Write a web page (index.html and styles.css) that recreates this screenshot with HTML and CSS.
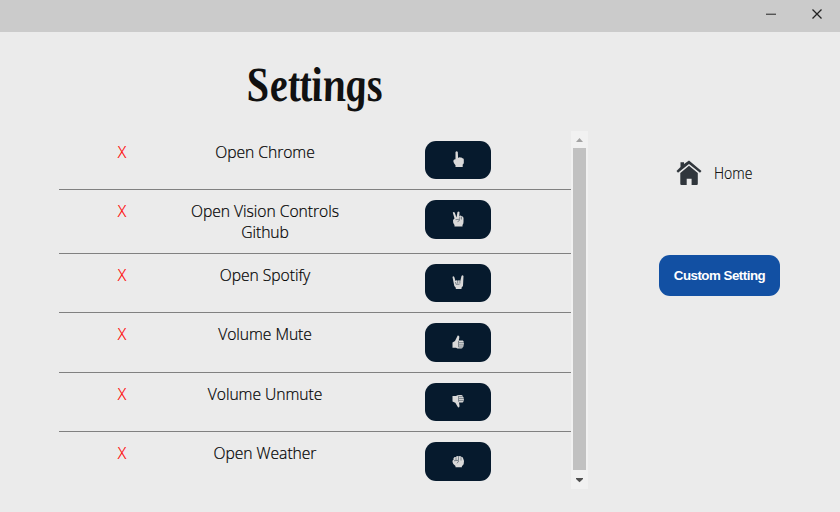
FILE: index.html
```html
<!DOCTYPE html>
<html lang="en">
<head>
<meta charset="utf-8">
<title>Settings</title>
<link rel="stylesheet" href="styles.css">
</head>
<body>
<header class="titlebar">
  <svg class="win" viewBox="0 0 16 16"><path d="M3 13.5h10" stroke="#999"/><path d="M3 14.5h10" stroke="#555"/></svg>
  <svg class="win" viewBox="0 0 16 16"><path d="M3.5 9.5l9 9M12.5 9.5l-9 9" stroke="#222" stroke-width="1.3"/></svg>
</header>
<main class="layout">
  <section class="panel">
    <h1 class="title"><span>Settings</span></h1>
    <div class="scroller">
      <ul class="list">
        <li class="row"><span class="remove">X</span><span class="name">Open Chrome</span><button class="gesture"><svg viewBox="0 0 16 18"><path d="M5 2Q6.2.3 7.3 2L7.6 8Q9 6.6 10 7.6Q11 7 12 8.2Q13.7 8.2 13.3 10V13Q13 14 12.2 14.5V17H5V15.2Q3 13.4 2.8 11Q3 9 5 9.2Z"/></svg></button></li>
        <li class="row"><span class="remove">X</span><span class="name">Open Vision Controls Github</span><button class="gesture"><svg viewBox="0 0 16 18"><path d="M2.3 2.5Q3.2 1.4 4.2 2.5L6 7.5L7 2Q8 .8 9 2L8.8 6.5Q10.2 4.8 11 6.3Q12.8 6 13 8V12Q13 14 12 15V16.5H4V15Q2.3 13.5 2.5 10.5Q2.6 9.3 4 8.5Z"/><path class="crease" d="M5 9.7L9 9.2Q9.5 11 7 11.7M9.3 6.8V9.2M11 6.8V9.5"/></svg></button></li>
        <li class="row"><span class="remove">X</span><span class="name">Open Spotify</span><button class="gesture"><svg viewBox="0 0 16 18"><path d="M2 4Q2.8 2.7 3.8 4L5 8Q6 6.5 7.2 7.8Q8.6 6.6 9.8 8L11 3Q12 1.5 13 3L12.6 11Q13 13.5 11 14.7V16H5.3V14.7Q3.4 13.7 3.4 11Z"/><path class="crease" d="M5 9L5.5 11.3H9M7.2 8V10.5M9.4 8V10.5"/></svg></button></li>
        <li class="row"><span class="remove">X</span><span class="name">Volume Mute</span><button class="gesture"><svg viewBox="0 0 16 18"><path d="M2 9.5L4.5 8L7.2 2.5Q9.3 2 8.8 5L8.2 7.5H12.3Q13.6 8 13 9.5Q14 10.7 13 12Q13.5 13.5 12.3 14.2Q12 15.5 10.5 15.5H7L5.5 14.8H2Z"/><path class="crease" d="M8.5 9.7H13M8.5 11.9H13M8.5 14H12.3M8 8V14.3"/></svg></button></li>
        <li class="row"><span class="remove">X</span><span class="name">Volume Unmute</span><button class="gesture"><svg viewBox="0 0 16 18"><path d="M2 4H5.5Q7 2.5 11 3Q12.3 3.2 12.3 4.4Q13.5 5 13 6.5Q14 7.7 13 9Q13 10.4 12 10.4H8.5L9 13.5Q9.2 15.8 7.5 15.3L4.8 10.7L2 9.5Z"/><path class="crease" d="M8.5 4.6H12.3M8.5 6.6H13M8.5 8.6H13M8 4V9.7"/></svg></button></li>
        <li class="row"><span class="remove">X</span><span class="name">Open Weather</span><button class="gesture"><svg viewBox="0 0 16 18"><path d="M3 6.3Q3.8 4.5 5.4 5Q6.6 3.2 8 4.4Q9.8 3.3 10.6 4.8Q12.5 4.7 12.8 6.8Q14.1 9 13.2 12Q12.6 13.6 11.4 14V15.3H5V14Q2.4 12.5 2 10Q1.7 8.3 3 7.8Z"/><path class="crease" d="M3.5 8.8L7.7 8.3Q8.8 10 6.3 11.2M5.5 5.3V8.2M8 5V8.4M10.5 5.2V8.6"/></svg></button></li>
      </ul>
      <div class="scrollbar">
        <svg class="arrow" viewBox="0 0 17 17"><path d="M8.5 7L12 11H5Z" fill="#a3a3a3"/></svg>
        <div class="thumb"></div>
        <svg class="arrow" viewBox="0 0 17 17"><path d="M5 6H12V7L8.5 10.3L5 7Z" fill="#505050"/></svg>
      </div>
    </div>
  </section>
  <aside class="side">
    <a class="home"><svg viewBox="0 0 26 26"><path d="M4.5 7V2.2H8V4L13 .5L25.5 11L24 12.8L13 3.9L2 12.8L.5 11Z"/><path d="M13 5.7L21.8 13V23.7Q21.8 24.9 20.7 24.9H15.6V18.7H10.7V24.9H5.4Q4.3 24.9 4.3 23.7V13Z"/></svg><span>Home</span></a>
    <button class="custom">Custom Setting</button>
  </aside>
</main>
</body>
</html>
```
FILE: styles.css
```css
* { box-sizing: border-box; }
body {
  margin: 0;
  width: 840px;
  height: 512px;
  overflow: hidden;
  background: #ebebeb;
  color: #111;
  font-family: "Open Sans", "Noto Sans", sans-serif;
}
.titlebar {
  display: flex;
  justify-content: flex-end;
  gap: 30px;
  height: 32px;
  padding-right: 15px;
  background: #cbcbcb;
}
.win { width: 16px; height: 16px; fill: none; overflow: visible; }
.layout { display: flex; }
.panel { width: 529px; margin-left: 59px; }
.title {
  height: 99px;
  margin: 0;
  padding-top: 23px;
  text-align: center;
  font: bold italic 49px/60px "Liberation Serif", serif;
}
.title span { display: inline-block; transform: translateX(-9px) skewX(7deg) scaleX(.85); }
.scroller { display: flex; height: 358px; overflow: hidden; }
.list {
  display: grid;
  grid-template-rows: 59px 64px 59px 60px 59px 60px;
  width: 512px;
  margin: 0;
  padding: 0;
  list-style: none;
}
.row {
  display: grid;
  grid-template-columns: 126px 160px 226px;
  justify-items: center;
  align-items: start;
  padding-top: 10px;
  border-bottom: 1px solid #808080;
  font-size: 15.7px;
  font-weight: 300;
  line-height: 21px;
  color: #000;
  -webkit-text-stroke-width: .2px;
}
.row:last-child { border-bottom: 0; }
.remove { padding-top: 1px; color: #f00; }
.name { padding-top: 1px; text-align: center; letter-spacing: -.05px; }
.gesture {
  display: flex;
  align-items: center;
  justify-content: center;
  width: 66px;
  height: 39px;
  padding: 0 0 2px;
  border: 0;
  border-radius: 11px;
  background: #061a2d;
}
.row:nth-child(odd) .gesture { height: 38px; }
.gesture svg { width: 17px; height: 18px; fill: #d9d9d9; }
.crease { fill: none; stroke: #56616c; stroke-width: .7; }
.scrollbar { display: flex; flex-direction: column; width: 17px; background: #f1f1f1; }
.arrow { width: 17px; height: 17px; }
.thumb { width: 13px; height: 322px; margin: 0 2px 2px; background: #c1c1c1; }
.side { display: flex; flex-direction: column; width: 252px; padding: 128px 0 0 71px; }
.home {
  display: flex;
  align-items: center;
  gap: 12px;
  height: 26px;
  margin-left: 17px;
  color: #000;
  font-size: 15.6px;
  font-weight: 300;
  -webkit-text-stroke-width: .15px;
}
.home span { transform: scaleX(.9); transform-origin: left; }
.home svg { width: 26px; height: 26px; fill: #30363c; }
.custom {
  width: 121px;
  height: 41px;
  margin-top: 69px;
  padding: 0;
  border: 0;
  border-radius: 11px;
  background: #1250a3;
  color: #fff;
  font: bold 13.333px "Liberation Sans", sans-serif;
  letter-spacing: -.5px;
}
```
